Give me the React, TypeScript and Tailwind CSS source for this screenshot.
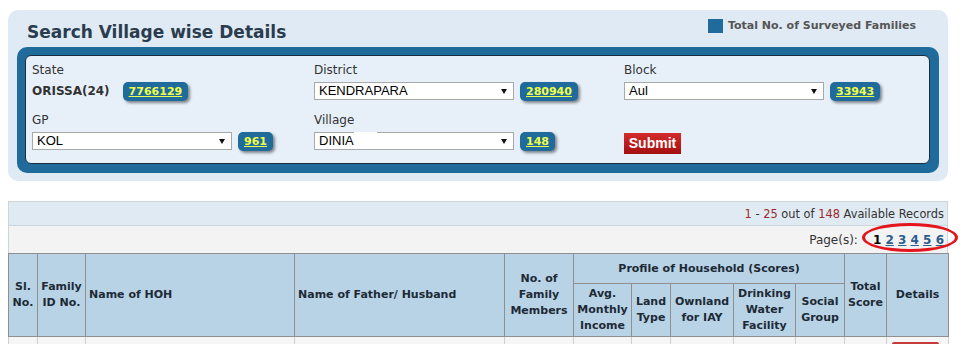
import React from "react";

function Badge({ value }: { value: string }) {
  return (
    <span className="block h-[19px] shrink-0 rounded-[5px] bg-[#1f6b9c] px-[6px] text-[11px] font-bold leading-[19px] text-[#f0ff4a] underline shadow-[2px_2px_3px_rgba(0,0,0,0.45)]">
      {value}
    </span>
  );
}

function Select({ value, redact }: { value: string; redact?: boolean }) {
  return (
    <div className="relative flex h-[18px] w-[200px] shrink-0 items-center justify-between border border-[#a9a9a9] bg-white pl-[4px] pr-[6px] font-['Liberation_Sans',Arial,sans-serif] text-[13px] leading-[16px] text-black">
      <span>{value}</span>
      <svg width="6" height="5" viewBox="0 0 6 5" className="block">
        <polygon points="0,0 6,0 3,5" fill="#111" />
      </svg>
      {redact ? <div className="absolute left-[39px] top-[-1px] h-[9px] w-[23px] bg-white" /> : null}
    </div>
  );
}

function Label({ children }: { children?: React.ReactNode }) {
  return <div className="h-[15px] text-[12px] leading-[15px] text-[#333]">{children}</div>;
}

const th = "border border-[#8f8f8f] bg-[#b8d3e6] p-0 align-middle";

export default function App() {
  return (
    <div className="relative h-[351px] w-[964px] overflow-hidden bg-white font-['DejaVu_Sans',Verdana,sans-serif] leading-[16px] text-[#333]">
      <div className="pl-[8px] pt-[10px]">
        {/* Search panel */}
        <div className="w-[940px] rounded-[10px] bg-[#dfeaf4] px-[9px] pb-[8px]">
          <div className="flex h-[37px] items-start justify-between">
            <h1 className="mt-[12px] pl-[10px] text-[17px] font-bold leading-[20px] text-[#2b3c4e]">
              Search Village wise Details
            </h1>
            <div className="mr-[23px] mt-[9px] flex items-center gap-[5px]">
              <span className="block h-[14px] w-[15px] bg-[#1f6b9c]" />
              <span className="text-[11px] font-bold leading-[14px] text-[#555]">
                Total No. of Surveyed Families
              </span>
            </div>
          </div>
          <div className="rounded-[10px] bg-[#1f6b9c] pb-[9px] pl-[8px] pr-[9px] pt-[8px]">
            <div className="h-[109px] rounded-[6px] border border-[#1b2d3d] bg-[#e7f0f9] pl-[6px] pt-[7px]">
              <div className="grid grid-cols-[282px_310px_1fr] gap-y-[12px]">
                <div className="flex flex-col">
                  <Label>State</Label>
                  <div className="mt-[4px] flex h-[19px] items-center">
                    <span className="text-[12px] font-bold leading-[15px] text-[#333]">ORISSA(24)</span>
                    <span className="ml-[13px] block">
                      <Badge value="7766129" />
                    </span>
                  </div>
                </div>
                <div className="flex flex-col">
                  <Label>District</Label>
                  <div className="mt-[4px] flex items-start gap-[6px]">
                    <Select value="KENDRAPARA" />
                    <Badge value="280940" />
                  </div>
                </div>
                <div className="flex flex-col">
                  <Label>Block</Label>
                  <div className="mt-[4px] flex items-start gap-[6px]">
                    <Select value="Aul" />
                    <Badge value="33943" />
                  </div>
                </div>
                <div className="flex flex-col">
                  <Label>GP</Label>
                  <div className="mt-[4px] flex items-start gap-[6px]">
                    <Select value="KOL" />
                    <Badge value="961" />
                  </div>
                </div>
                <div className="flex flex-col">
                  <Label>Village</Label>
                  <div className="mt-[4px] flex items-start gap-[6px]">
                    <Select value="DINIA" redact />
                    <Badge value="148" />
                  </div>
                </div>
                <div className="flex flex-col">
                  <Label />
                  <div className="mt-[5px] flex">
                    <button className="block h-[21px] w-[57px] bg-gradient-to-b from-[#d42a2a] to-[#a30f0f] font-['Liberation_Sans',Arial,sans-serif] text-[14px] font-bold leading-[21px] text-white">
                      Submit
                    </button>
                  </div>
                </div>
              </div>
            </div>
          </div>
        </div>

        {/* Result table */}
        <div className="mt-[20px] w-[940px]">
          <div className="h-[25px] border border-[#cdd5dc] bg-[#dfeaf3] pr-[3px] text-right text-[11.4px] leading-[24px] text-[#333]">
            <span className="text-[#9b2b2b]">1</span> - <span className="text-[#9b2b2b]">25</span> out of{" "}
            <span className="text-[#9b2b2b]">148</span> Available Records
          </div>
          <div className="flex h-[27px] items-center justify-end border-x border-[#cdd5dc] bg-[#f3f3f3] pr-[3px] text-[#333]">
            <span className="text-[12px] leading-[26px]">Page(s):</span>
            <span className="ml-[15px] text-[12px] font-bold leading-[26px]">
              <span className="text-black">1</span> <span className="text-[#2c5e8e] underline">2</span>{" "}
              <span className="text-[#2c5e8e] underline">3</span> <span className="text-[#2c5e8e] underline">4</span>{" "}
              <span className="text-[#2c5e8e] underline">5</span> <span className="text-[#2c5e8e] underline">6</span>
            </span>
          </div>
          <table className="w-[940px] table-fixed border-collapse text-[11px] font-bold leading-[16px] text-[#1d2a36]">
            <colgroup>
              <col className="w-[29px]" />
              <col className="w-[48px]" />
              <col className="w-[209px]" />
              <col className="w-[210px]" />
              <col className="w-[69px]" />
              <col className="w-[58px]" />
              <col className="w-[39px]" />
              <col className="w-[63px]" />
              <col className="w-[62px]" />
              <col className="w-[49px]" />
              <col className="w-[42px]" />
              <col className="w-[62px]" />
            </colgroup>
            <thead>
              <tr className="h-[30px]">
                <th rowSpan={2} className={`${th} text-center`}>
                  Sl.
                  <br />
                  No.
                </th>
                <th rowSpan={2} className={`${th} text-center`}>
                  Family
                  <br />
                  ID No.
                </th>
                <th rowSpan={2} className={`${th} pl-[3px] text-left`}>
                  Name of HOH
                </th>
                <th rowSpan={2} className={`${th} pl-[3px] text-left`}>
                  Name of Father/ Husband
                </th>
                <th rowSpan={2} className={`${th} text-center`}>
                  No. of
                  <br />
                  Family
                  <br />
                  Members
                </th>
                <th colSpan={5} className={`${th} text-center`}>
                  Profile of Household (Scores)
                </th>
                <th rowSpan={2} className={`${th} text-center`}>
                  Total
                  <br />
                  Score
                </th>
                <th rowSpan={2} className={`${th} text-center`}>
                  Details
                </th>
              </tr>
              <tr className="h-[53px]">
                <th className={`${th} text-center`}>
                  Avg.
                  <br />
                  Monthly
                  <br />
                  Income
                </th>
                <th className={`${th} text-center`}>
                  Land
                  <br />
                  Type
                </th>
                <th className={`${th} text-center`}>
                  Ownland
                  <br />
                  for IAY
                </th>
                <th className={`${th} text-center`}>
                  Drinking
                  <br />
                  Water
                  <br />
                  Facility
                </th>
                <th className={`${th} text-center`}>
                  Social
                  <br />
                  Group
                </th>
              </tr>
            </thead>
            <tbody>
              <tr className="h-[7px]">
                {Array.from({ length: 11 }).map((_, i) => (
                  <td key={i} className="h-[7px] border-x border-[#cfcfcf] bg-[#f6f6f6] p-0" />
                ))}
                <td className="h-[7px] border-x border-[#cfcfcf] bg-[#f6f6f6] p-0 align-bottom">
                  <div className="ml-[5px] mt-[5px] h-[2px] w-[47px] rounded-t-[3px] bg-[#c83a3a]" />
                </td>
              </tr>
            </tbody>
          </table>
        </div>
      </div>

      {/* red annotation ellipse */}
      <div className="absolute left-[862px] top-[223px] h-[29px] w-[96px] rounded-[50%] border-[3px] border-[#e3161e]" />
    </div>
  );
}
